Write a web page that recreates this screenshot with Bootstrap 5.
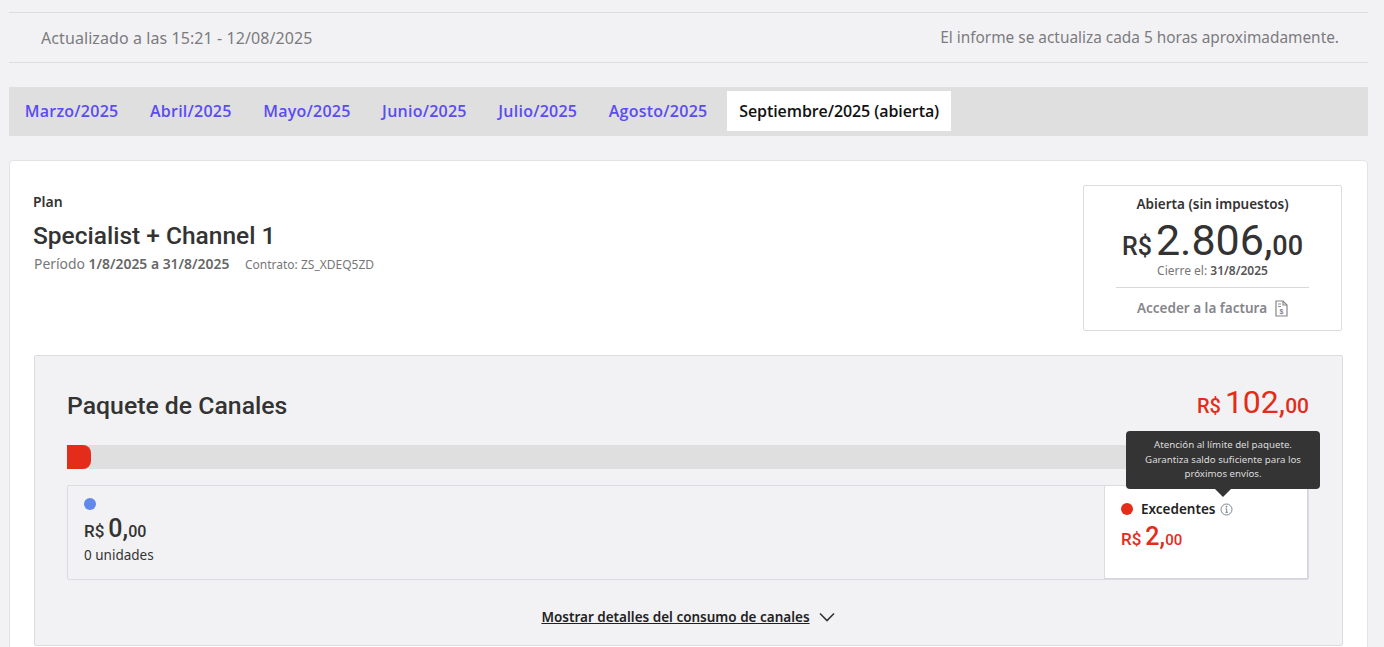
<!DOCTYPE html>
<html lang="es"><head><meta charset="utf-8"><title>Informe</title>
<link href="https://cdn.jsdelivr.net/npm/bootstrap@5.3.0/dist/css/bootstrap.min.css" rel="stylesheet">
<style>
html,body{height:647px;overflow:hidden}
body{background:#f2f2f4;font-family:"Noto Sans",Lato,sans-serif;color:#333;padding:12px 16px 0 9px}
.updbar{height:51px;border-top:1px solid #dedede;border-bottom:1px solid #dedede;padding:0 29px 0 32px;color:#7b7b7f}
.upd-l{font-size:16px;letter-spacing:.08px}
.upd-r{font-size:15.4px}
.tabbar{margin-top:24px;height:49px;background:#dfdfdf;padding:4px 0}
.tabbar a{font-family:"Open Sans",sans-serif;font-size:16px;font-weight:600;color:#5a4bf5;text-decoration:none;padding:0 15.750px;height:40px;display:flex;align-items:center;white-space:nowrap;letter-spacing:.25px}
.tabbar a.sel{background:#fff;color:#111;padding:0 12px;margin-left:4px;letter-spacing:-.08px}
.mainbox{margin-top:24px;background:#fff;border:1px solid #e3e3e6;border-radius:4px 4px 0 0;padding:24px 24px 0 24px;height:520px}
.plan-lbl{font-size:14px;font-weight:600;line-height:18px;margin:8px 0 0 -1px}
.plan-name{font-family:Roboto,sans-serif;font-size:24.500px;font-weight:500;line-height:32px;margin:9px 0 3px -1px;color:#333}
.plan-sub{font-size:13.900px;color:#777;line-height:18px}
.plan-sub b{font-weight:600;color:#666}
.plan-sub small{font-size:12px;margin-left:12px}
.invbox{width:259px;height:146px;border:1px solid #dcdce0;border-radius:2px;text-align:center;padding:9px 32px 0;margin-right:1px}
.inv-t{font-size:13.500px;font-weight:600;line-height:18px}
.inv-v{font-family:Roboto,sans-serif;line-height:28px;margin-top:13px;font-weight:400;color:#333;white-space:nowrap;height:37px}
.inv-v .cur{font-size:25px;font-weight:500}.inv-v .int{font-size:43px}.inv-v .dec{font-size:27px;font-weight:500}
.inv-c{font-size:12px;color:#777;line-height:14px;margin-top:1px}.inv-c b{font-weight:600;color:#555}
.inv-l{margin-top:9px;border-top:1px solid #d8d8d8;padding-top:10px;font-size:13.500px;font-weight:600;color:#85858b;display:flex;justify-content:center;align-items:center;gap:8px}
.pack{margin-top:24px;height:291px;background:#f2f2f4;border:1px solid #dcdce0;border-radius:2px;padding:27px 33px 0 32px;position:relative}
.pack-h{height:44px}
.pack-t{font-family:Roboto,sans-serif;font-size:24.800px;font-weight:500;line-height:44px;color:#333;margin-top:1px}
.pack-v{font-family:Roboto,sans-serif;color:#e32c19;white-space:nowrap;line-height:38px;height:38px}
.pack-v .cur{font-size:20px;font-weight:500}.pack-v .int{font-size:32px}.pack-v .dec{font-size:21px;font-weight:500}
.meter{margin-top:18px;height:24px;background:#dfdfdf;border-radius:0}
.meter i{display:block;width:24px;height:24px;background:#e32c19;border-radius:0 8px 8px 0}
.cells{margin-top:16px;height:95px;border:1px solid #dcdce0;border-radius:2px}
.cell-a{padding:12px 16px;flex:1 1 auto}
.cell-b{width:204px;background:#fff;border-left:1px solid #dcdce0;border-right:1px solid #d4d4dc;border-bottom:1px solid #d4d4dc;padding:14px 16px 0}
.dot{width:12px;height:12px;border-radius:50%;display:block}
.amt{font-family:Roboto,sans-serif;line-height:28px;height:28px;white-space:nowrap;margin-top:5px}
.amt .cur{font-size:17px;font-weight:500}.amt .int{font-size:25px;font-weight:500}.amt .dec{font-size:16px;font-weight:500}
.cell-b .amt{margin-top:5px}
.cell-b .amt .dec{font-size:15px}
.units{font-size:13.500px;color:#333;line-height:18px;margin-top:3px}
.exc{font-size:13.500px;font-weight:600;color:#222;line-height:18px;gap:7px}
.red{color:#e32c19}
.hint{position:absolute;left:1091px;top:75px;width:194px;height:58px;background:#343434;color:#dcdcdc;border-radius:4px;font-size:9.700px;line-height:14.500px;text-align:center;padding:7px 12px}
.hint::after{content:"";position:absolute;left:89px;bottom:-8px;border:8px solid transparent;border-bottom:0;border-top-color:#343434}
.more{margin-top:28px;font-size:13.500px;line-height:18px;font-weight:600;color:#222;gap:9px}
.more span{text-decoration:underline}
</style></head><body>
<div class="updbar d-flex justify-content-between align-items-center"><span class="upd-l">Actualizado a las 15:21 - 12/08/2025</span><span class="upd-r">El informe se actualiza cada 5 horas aproximadamente.</span></div>
<nav class="tabbar d-flex">
<a href="#">Marzo/2025</a><a href="#">Abril/2025</a><a href="#">Mayo/2025</a><a href="#">Junio/2025</a><a href="#">Julio/2025</a><a href="#">Agosto/2025</a><a href="#" class="sel">Septiembre/2025 (abierta)</a>
</nav>
<div class="mainbox">
<div class="d-flex justify-content-between">
<div><div class="plan-lbl">Plan</div><div class="plan-name">Specialist + Channel 1</div><div class="plan-sub">Período <b>1/8/2025 a 31/8/2025</b> <small>Contrato: ZS_XDEQ5ZD</small></div></div>
<div class="invbox"><div class="inv-t">Abierta (sin impuestos)</div>
<div class="inv-v"><span class="cur">R$</span> <span class="int">2.806,</span><span class="dec">00</span></div>
<div class="inv-c">Cierre el: <b>31/8/2025</b></div>
<div class="inv-l"><span>Acceder a la factura</span>
<svg width="13" height="17" viewBox="0 0 13 17" fill="none" stroke="#85858b" stroke-width="1.2"><path d="M1 1h7l4 4v11H1z"/><path d="M8 1v4h4"/><path d="M3 4h3M3 6.500h3" stroke-width=".9"/><text x="6.500" y="14" font-size="7" font-weight="700" text-anchor="middle" fill="#85858b" stroke="none" font-family="Liberation Sans">$</text></svg></div></div>
</div>
<div class="pack">
<div class="pack-h d-flex justify-content-between align-items-start"><div class="pack-t">Paquete de Canales</div><div class="pack-v"><span class="cur">R$</span> <span class="int">102,</span><span class="dec">00</span></div></div>
<div class="meter"><i></i></div>
<div class="cells d-flex">
<div class="cell-a"><span class="dot" style="background:#6188ea"></span>
<div class="amt"><span class="cur">R$</span> <span class="int">0,</span><span class="dec">00</span></div><div class="units">0 unidades</div></div>
<div class="cell-b"><div class="exc d-flex align-items-center"><span class="dot" style="background:#e32c19;margin-right:1px"></span><span>Excedentes</span>
<svg width="13" height="13" viewBox="0 0 13 13" fill="none" stroke="#7c8594" style="margin-left:-3px"><circle cx="6.500" cy="6.500" r="5.500"/><path d="M5.500 5.800h1.200v3.500M5.300 9.300h2.600"/><circle cx="6.400" cy="3.700" r=".5" fill="#7c8594"/></svg></div>
<div class="amt red"><span class="cur">R$</span> <span class="int">2,</span><span class="dec">00</span></div></div>
</div>
<div class="more d-flex justify-content-center align-items-center"><span>Mostrar detalles del consumo de canales</span>
<svg width="16" height="10" viewBox="0 0 16 10" fill="none" stroke="#333" stroke-width="1.600"><path d="M1 1.500l7 7 7-7"/></svg></div>
<div class="hint">Atención al límite del paquete. Garantiza saldo suficiente para los próximos envíos.</div>
</div>
</div>
</body></html>
